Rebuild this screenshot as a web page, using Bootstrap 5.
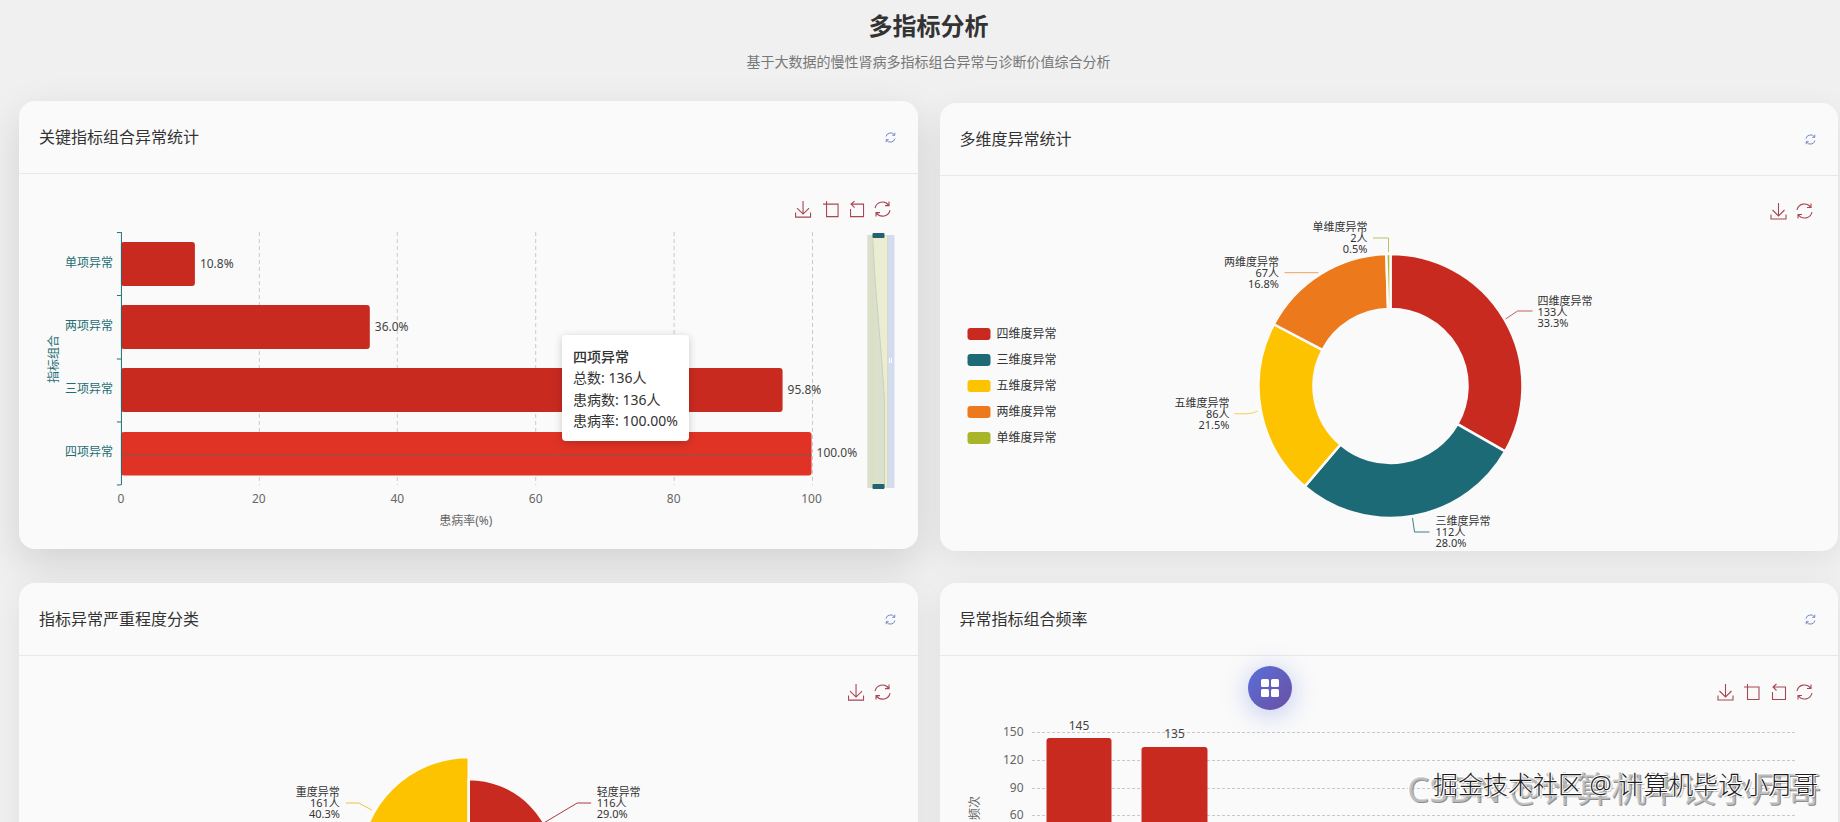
<!DOCTYPE html>
<html lang="zh-CN">
<head>
<meta charset="utf-8">
<title>多指标分析</title>
<link href="https://cdn.jsdelivr.net/npm/bootstrap@5.3.0/dist/css/bootstrap.min.css" rel="stylesheet">
<style>
html,body{height:822px;overflow:hidden}
body{background:#f0f0f0;font-family:"Noto Sans","Noto Sans CJK SC",sans-serif;color:#333;position:relative}
.page-head{padding:11px 2px 0 19px;margin-bottom:31px}
.page-head h2{font-size:24px;font-weight:700;color:#333;margin-bottom:11px;line-height:29px}
.page-head p{font-size:14px;line-height:21px;color:#777;margin:0}
.board{display:grid;grid-template-columns:1fr 1fr;column-gap:22px;row-gap:32px;padding:0 2px 0 19px}
.chart-card{background:#fafafa;border:0;border-radius:16px;box-shadow:0 8px 32px rgba(0,0,0,.07);height:448px;overflow:hidden}
.chart-card.raised{transform:translateY(-2px);box-shadow:0 14px 40px rgba(0,0,0,.13);overflow:visible}
.chart-card .card-header{background:transparent;border-bottom:1px solid #e9e9e9;height:73px;padding:0 21px 0 20px;border-radius:16px 16px 0 0}
.chart-card .card-header span{font-size:16px;color:#333}
.chart-card .card-body{padding:0}
.chart-svg{display:block;width:100%;height:375px}
.chart-svg text{font-family:"Noto Sans","Noto Sans CJK SC",sans-serif}
.tl{font-size:12px;fill:#666}
.cat{font-size:12px;fill:#1f6d73}
.val{font-size:12px;fill:#444}
.lab{font-size:11px;fill:#333}
.leg{font-size:12px;fill:#333}
.tip-box{position:absolute;left:543px;top:234px;width:127px;height:106px;background:#fff;border-radius:4px;box-shadow:0 2px 9px rgba(0,0,0,.2);padding:11px 11px;font-size:14px;line-height:21.3px;color:#333;white-space:nowrap}
.tip-box b{font-weight:500}
.fab-round{position:absolute;left:1248px;top:666px;width:44px;height:44px;border-radius:50%;background:linear-gradient(135deg,#5a70d9,#6a4fa3);box-shadow:0 4px 26px rgba(102,126,234,.42)}
.fab-cells{display:grid;grid-template-columns:8px 8px;gap:2px}
.fab-cells i{display:block;width:8px;height:8px;background:#fff;border-radius:1.5px}
.wm-back,.wm-front{position:absolute;white-space:nowrap;pointer-events:none}
.wm-back{left:1407px;top:765px;font-size:35px;line-height:48px;color:rgba(200,200,200,.8);text-shadow:1px 1px 0 #8f8f8f,-1px -1px 0 #fff}
.wm-front{left:1433px;top:767px;font-size:25px;line-height:34px;color:#1c1c1c;font-weight:300;text-shadow:1px 1px 0 #fff,-1px 0 0 #fff,0 -1px 0 #fff,2px 2px 1px rgba(0,0,0,.25)}
</style>
</head>
<body>
<div class="page-head text-center">
  <h2>多指标分析</h2>
  <p>基于大数据的慢性肾病多指标组合异常与诊断价值综合分析</p>
</div>
<div class="board">
  <!-- 关键指标组合异常统计 -->
  <div class="card chart-card raised position-relative">
    <div class="card-header d-flex justify-content-between align-items-center">
      <span>关键指标组合异常统计</span>
      <svg width="13" height="13" viewBox="0 0 13 13" fill="none" stroke="#7486cc" stroke-width="1"><path d="M2 5.5A4.7 4.7 0 0 1 10.5 4M11 7.5A4.7 4.7 0 0 1 2.500 9"/><path d="M10.800 1.800V4.300H8.300M2.200 11.200V8.700H4.700"/></svg>
    </div>
    <div class="card-body">
      <svg class="chart-svg" viewBox="19 174 899 375">
        <defs>
          <symbol id="i-save" viewBox="0 0 18 18"><path d="M9 1V14M3 8L9 14L15 8M1.500 12.500V17H16.500V12.500" fill="none" stroke="#a84653" stroke-width="1.100"/></symbol>
          <symbol id="i-crop" viewBox="0 0 18 18"><path d="M0.500 4H15.500V16.500H4V1" fill="none" stroke="#a84653" stroke-width="1.100"/></symbol>
          <symbol id="i-back" viewBox="0 0 18 18"><path d="M4 4H16V16.500H3V9M7 1L3.500 4L7 7.500" fill="none" stroke="#a84653" stroke-width="1.100"/></symbol>
          <symbol id="i-redo" viewBox="0 0 18 18"><path d="M1.500 8A7.600 7.600 0 0 1 15 5M16.500 10A7.600 7.600 0 0 1 3 13M15.500 1.500V5.500H11.500M2.500 16.500V12.500H6.500" fill="none" stroke="#a84653" stroke-width="1.100"/></symbol>
        </defs>
        <g stroke="#c9c9c9" stroke-dasharray="4 3"><path d="M259.500 232V485M397.500 232V485M536 232V485M674.500 232V485M813 232V485"/></g>
        <g fill="#c92a20">
          <rect x="121" y="242" width="74" height="44" rx="3"/>
          <rect x="121" y="305" width="249" height="44" rx="3"/>
          <rect x="121" y="368" width="662" height="44" rx="3"/>
        </g>
        <rect x="121" y="432" width="691" height="43.500" rx="3" fill="#e03325"/>
        <path d="M121 455H812" stroke="#7d5a52" stroke-width="1"/>
        <path d="M121.500 232V485M117 232.500H121M117 295.500H121M117 359H121M117 422H121M117 485H121" stroke="#1f6d73" fill="none"/>
        <g class="cat" text-anchor="end" dominant-baseline="central">
          <text x="113" y="262" class="cat">单项异常</text><text x="113" y="325" class="cat">两项异常</text>
          <text x="113" y="389" class="cat">三项异常</text><text x="113" y="452" class="cat">四项异常</text>
        </g>
        <text class="cat" text-anchor="middle" dominant-baseline="central" transform="translate(54 359) rotate(-90)">指标组合</text>
        <g text-anchor="start" dominant-baseline="central">
          <text class="val" x="200" y="263">10.8%</text><text class="val" x="375" y="326">36.0%</text>
          <text class="val" x="788" y="390">95.8%</text><text class="val" x="817" y="453">100.0%</text>
        </g>
        <g text-anchor="middle" dominant-baseline="central">
          <text class="tl" x="121" y="499">0</text><text class="tl" x="259" y="499">20</text><text class="tl" x="397.500" y="499">40</text>
          <text class="tl" x="536" y="499">60</text><text class="tl" x="674" y="499">80</text><text class="tl" x="812" y="499">100</text>
          <text class="tl" x="466" y="521">患病率(%)</text>
        </g>
        <use href="#i-save" x="794.500" y="200" width="18" height="18"/>
        <use href="#i-crop" x="823" y="200" width="18" height="18"/>
        <use href="#i-back" x="848" y="200" width="18" height="18"/>
        <use href="#i-redo" x="874" y="200" width="18" height="18"/>
        <!-- dataZoom -->
        <rect x="868" y="235" width="27" height="253" fill="#d3dcee"/>
        <rect x="868" y="235" width="20" height="253" fill="#ebedd2"/>
        <path d="M868 235H873C875 290 882 345 885 400V488H868Z" fill="#dbe0cb"/>
        <path d="M873 235C875 290 882 345 885 400V488" fill="none" stroke="#c9d0bd"/>
        <path d="M872.500 235V488M888 235V488" stroke="#d9dcc0"/>
        <rect x="873" y="233" width="12" height="5" rx="1" fill="#22636f"/>
        <rect x="873" y="484" width="12" height="5" rx="1" fill="#22636f"/>
        <path d="M890 358V363M892 358V363" stroke="#fff"/>
      </svg>
    </div>
    <div class="tip-box"><b>四项异常</b><br>总数: 136人<br>患病数: 136人<br>患病率: 100.00%</div>
  </div>

  <!-- 多维度异常统计 -->
  <div class="card chart-card">
    <div class="card-header d-flex justify-content-between align-items-center">
      <span>多维度异常统计</span>
      <svg width="13" height="13" viewBox="0 0 13 13" fill="none" stroke="#7486cc" stroke-width="1"><path d="M2 5.500A4.700 4.700 0 0 1 10.500 4M11 7.500A4.700 4.700 0 0 1 2.500 9"/><path d="M10.800 1.800V4.300H8.300M2.200 11.200V8.700H4.700"/></svg>
    </div>
    <div class="card-body">
      <svg class="chart-svg" viewBox="939.500 176 898.500 375">
        <use href="#i-save" x="1769" y="202" width="18" height="18"/>
        <use href="#i-redo" x="1795" y="202" width="18" height="18"/>
        <g stroke="#fafafa" stroke-width="2.500" stroke-linejoin="round">
          <path fill="#c92a20" d="M1390 254A132 132 0 0 1 1504.660 451.400L1456.880 424.150A77 77 0 0 0 1390 309Z"/>
          <path fill="#1d6a77" d="M1504.660 451.400A132 132 0 0 1 1304.280 486.370L1340 444.550A77 77 0 0 0 1456.880 424.150Z"/>
          <path fill="#fdc300" d="M1304.280 486.370A132 132 0 0 1 1273.340 324.240L1321.950 349.970A77 77 0 0 0 1340 444.550Z"/>
          <path fill="#ec7a1c" d="M1273.340 324.240A132 132 0 0 1 1385.850 254.070L1387.580 309.040A77 77 0 0 0 1321.950 349.970Z"/>
          <path fill="#a9b528" d="M1385.850 254.070A132 132 0 0 1 1390 254L1390 309A77 77 0 0 0 1387.580 309.040Z"/>
        </g>
        <g fill="none" stroke-width="1">
          <path d="M1505 319L1517 311H1532" stroke="#c06060"/>
          <path d="M1372.500 238H1388V252" stroke="#b9c26a"/>
          <path d="M1284 272.700H1318" stroke="#efa060"/>
          <path d="M1234 413.700C1245 414 1252 414 1257 411" stroke="#f3cf50"/>
          <path d="M1412 518L1414 532H1429" stroke="#3f7f8a"/>
        </g>
        <g text-anchor="start" dominant-baseline="central">
          <text class="lab" x="1537" y="300">四维度异常</text><text class="lab" x="1537" y="311">133人</text><text class="lab" x="1537" y="322">33.3%</text>
          <text class="lab" x="1435" y="520">三维度异常</text><text class="lab" x="1435" y="531">112人</text><text class="lab" x="1435" y="542">28.0%</text>
        </g>
        <g text-anchor="end" dominant-baseline="central">
          <text class="lab" x="1367" y="226">单维度异常</text><text class="lab" x="1367" y="237">2人</text><text class="lab" x="1367" y="248">0.5%</text>
          <text class="lab" x="1278.500" y="261">两维度异常</text><text class="lab" x="1278.500" y="272">67人</text><text class="lab" x="1278.500" y="283">16.8%</text>
          <text class="lab" x="1229" y="402">五维度异常</text><text class="lab" x="1229" y="413">86人</text><text class="lab" x="1229" y="424">21.5%</text>
        </g>
        <g>
          <rect x="967" y="328" width="23" height="12" rx="3" fill="#c92a20"/>
          <rect x="967" y="354" width="23" height="12" rx="3" fill="#1d6a77"/>
          <rect x="967" y="380" width="23" height="12" rx="3" fill="#fdc300"/>
          <rect x="967" y="406" width="23" height="12" rx="3" fill="#ec7a1c"/>
          <rect x="967" y="432" width="23" height="12" rx="3" fill="#a9b528"/>
        </g>
        <g dominant-baseline="central">
          <text class="leg" x="996" y="333">四维度异常</text><text class="leg" x="996" y="359">三维度异常</text>
          <text class="leg" x="996" y="385">五维度异常</text><text class="leg" x="996" y="411">两维度异常</text>
          <text class="leg" x="996" y="437">单维度异常</text>
        </g>
      </svg>
    </div>
  </div>

  <!-- 指标异常严重程度分类 -->
  <div class="card chart-card">
    <div class="card-header d-flex justify-content-between align-items-center">
      <span>指标异常严重程度分类</span>
      <svg width="13" height="13" viewBox="0 0 13 13" fill="none" stroke="#7486cc" stroke-width="1"><path d="M2 5.500A4.700 4.700 0 0 1 10.500 4M11 7.500A4.700 4.700 0 0 1 2.500 9"/><path d="M10.800 1.800V4.300H8.300M2.200 11.200V8.700H4.700"/></svg>
    </div>
    <div class="card-body">
      <svg class="chart-svg" viewBox="19 656 899 375">
        <use href="#i-save" x="847.500" y="683" width="18" height="18"/>
        <use href="#i-redo" x="874" y="683" width="18" height="18"/>
        <g stroke="#fafafa" stroke-width="2.500" stroke-linejoin="round">
          <path fill="#fdc300" d="M469 866L360 866A109 109 0 0 1 469 757Z"/>
          <path fill="#c92a20" d="M469 866L469 779A87 87 0 0 1 556 866Z"/>
        </g>
        <g fill="none">
          <path d="M346 803H359L372 810" stroke="#eac53a"/>
          <path d="M591.500 803H577.500L544 823" stroke="#a83a3f"/>
        </g>
        <g text-anchor="end" dominant-baseline="central">
          <text class="lab" x="340" y="791">重度异常</text><text class="lab" x="340" y="802">161人</text><text class="lab" x="340" y="813">40.3%</text>
        </g>
        <g dominant-baseline="central">
          <text class="lab" x="597" y="791">轻度异常</text><text class="lab" x="597" y="802">116人</text><text class="lab" x="597" y="813">29.0%</text>
        </g>
      </svg>
    </div>
  </div>

  <!-- 异常指标组合频率 -->
  <div class="card chart-card">
    <div class="card-header d-flex justify-content-between align-items-center">
      <span>异常指标组合频率</span>
      <svg width="13" height="13" viewBox="0 0 13 13" fill="none" stroke="#7486cc" stroke-width="1"><path d="M2 5.500A4.700 4.700 0 0 1 10.500 4M11 7.500A4.700 4.700 0 0 1 2.500 9"/><path d="M10.800 1.800V4.300H8.300M2.200 11.200V8.700H4.700"/></svg>
    </div>
    <div class="card-body">
      <svg class="chart-svg" viewBox="939.500 656 898.500 375">
        <use href="#i-save" x="1716" y="683" width="18" height="18"/>
        <use href="#i-crop" x="1743" y="683" width="18" height="18"/>
        <use href="#i-back" x="1769" y="683" width="18" height="18"/>
        <use href="#i-redo" x="1795" y="683" width="18" height="18"/>
        <path d="M1031.500 732.500H1794.500M1031.500 760.500H1794.500M1031.500 788.500H1794.500M1031.500 815.500H1794.500" stroke="#c9c9c9" stroke-dasharray="3 2"/>
        <g text-anchor="end" dominant-baseline="central">
          <text class="tl" x="1023" y="731">150</text><text class="tl" x="1023" y="759">120</text>
          <text class="tl" x="1023" y="787">90</text><text class="tl" x="1023" y="814">60</text>
        </g>
        <text class="tl" text-anchor="middle" dominant-baseline="central" transform="translate(974 808) rotate(-90)">频次</text>
        <rect x="1046" y="738" width="65" height="260" rx="3" fill="#c92a20"/>
        <rect x="1141" y="747" width="66" height="251" rx="3" fill="#c92a20"/>
        <g text-anchor="middle" dominant-baseline="central">
          <text class="val" x="1078.500" y="725">145</text><text class="val" x="1174" y="733">135</text>
        </g>
      </svg>
    </div>
  </div>
</div>

<div class="fab-round d-flex align-items-center justify-content-center">
  <div class="fab-cells"><i></i><i></i><i></i><i></i></div>
</div>
<div class="wm-back">CSDN @计算机毕设小月哥</div>
<div class="wm-front">掘金技术社区 @ 计算机毕设小月哥</div>
<script src="https://cdn.jsdelivr.net/npm/bootstrap@5.3.0/dist/js/bootstrap.bundle.min.js"></script>
</body>
</html>
